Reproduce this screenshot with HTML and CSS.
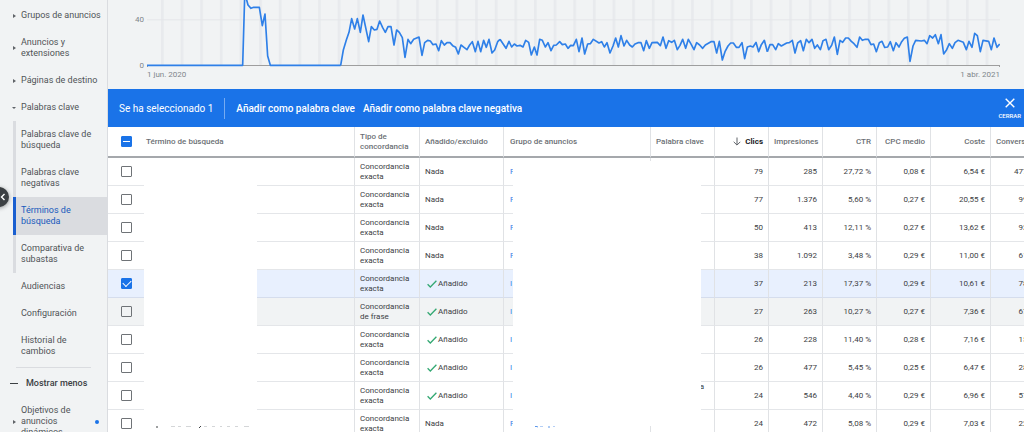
FILE: index.html
```html
<!DOCTYPE html>
<html lang="es">
<head>
<meta charset="utf-8">
<title>Términos de búsqueda</title>
<link rel="stylesheet" href="styles.css">
</head>
<body>
<div class="app">
  <nav class="sidebar">
    <a class="item closed" href="#">Grupos de anuncios</a>
    <a class="item closed" href="#">Anuncios y extensiones</a>
    <a class="item closed" href="#">Páginas de destino</a>
    <a class="item open" href="#">Palabras clave</a>
    <div class="subnav">
      <a class="item" href="#">Palabras clave de búsqueda</a>
      <a class="item" href="#">Palabras clave negativas</a>
      <a class="item current" href="#" aria-current="page">Términos de búsqueda</a>
      <a class="item" href="#">Comparativa de subastas</a>
    </div>
    <a class="item" href="#">Audiencias</a>
    <a class="item" href="#">Configuración</a>
    <a class="item" href="#">Historial de cambios</a>
    <hr class="rule">
    <button class="less" type="button"><span class="minus"></span>Mostrar menos</button>
    <a class="item closed dotted" href="#"><span>Objetivos de anuncios dinámicos</span><i class="dot"></i></a>
    <button class="collapse" type="button" aria-label="Contraer">
      <svg width="6" height="8" viewBox="0 0 6 8"><path d="M4.5 1 1.5 4l3 3" fill="none" stroke="#fff" stroke-width="1.4"/></svg>
    </button>
  </nav>
  <main class="main">
    <section class="chart">
      <div class="scale"><span>40</span><span>0</span></div>
      <div class="plot">
        <svg class="graph" viewBox="441 0 2559 201" preserveAspectRatio="none" aria-hidden="true">
          <defs><pattern id="weeks" x="483" y="0" width="58.9" height="201" patternUnits="userSpaceOnUse"><rect width="8" height="196" fill="#e8eaed"/></pattern></defs>
          <rect x="441" width="2559" height="196" fill="url(#weeks)"/>
          <path d="M441 59.500H3000" stroke="#e4e6e9" stroke-width="3"/>
          <path d="M441 196.500H3000M2998.500 196v5M442.500 196v5" stroke="#9e9e9e" stroke-width="3"/>
          <g class="line">
            <polyline points="441,196 728,196 734,-10 740,0 744,15 753,25 761,22 778,22 787,77 795,42 803,168 811,196 1022,196"/>
            <polyline transform="translate(690 0)" points="332,196 340,150 349,120 357,97 365,56 374,87 382,56 391,97 399,45 416,125 424,80 433,90 441,88 449,63 458,83 466,97 474,80 483,80 492,135 500,90 508,97 517,113 525,172 534,118 542,131 551,118 567,111 576,166 584,128 593,121 601,123 609,134 618,132 626,152 634,122 643,135 651,128 660,128 668,137 677,142 685,162 693,135 702,142 711,149 719,135 727,125 736,155 744,124 752,155 761,121 769,142 777,118 786,159 794,150 803,125 810,118"/>
            <polyline transform="translate(1500 0)" points="0,118 18,145 27,124 35,141 43,132 51,138 60,136 69,141 77,121 86,127 94,165 103,141 111,165 119,118 127,121 136,141 144,128 153,152 161,136 169,135 179,125 187,134 196,132 204,145 212,136 220,137 229,118 237,155 246,114 254,162 263,132 271,131 280,118 297,129 305,125 313,141 321,128 330,159 339,138 347,114 355,141 363,107 372,138 380,121 389,135 397,141 405,132 414,128 423,128 431,152 439,122 448,145 456,128 472,127 481,137 489,111 498,145 506,122 515,127 523,121 532,149 540,136 548,118 557,145 565,118 574,134 582,149 590,128 599,135 608,145 616,135 633,125 642,125 650,159 658,124 667,180 675,155 684,138 692,129 700,129 709,142 717,142 726,128 734,176 742,141 751,138 759,141 768,127 776,155 784,134 793,121 802,155"/>
            <polyline transform="translate(2280 0)" points="22,155 30,134 38,134 47,149 55,131 64,138 80,129 88,128 97,121 105,159 113,129 122,122 130,152 139,118 147,128 156,118 164,145 172,135 181,149 189,122 198,118 206,149 215,136 223,111 232,163 240,121 248,127 257,114 265,114 274,124 282,131 291,142 299,111 307,121 316,118 325,118 333,134 341,132 349,155 358,128 366,124 374,142 383,141 391,125 400,152 408,128 417,141 425,125 433,115 442,111 450,184 459,138 467,121 484,123 493,121 501,131 509,107 518,114 526,104 535,131 543,104 551,162 560,149 568,131 577,145 585,128 594,121 610,127 619,149 627,124 636,142 644,100 652,107 661,155 669,121 686,124 694,149 702,114 711,142 719,132"/>
          </g>
        </svg>
        <div class="dates"><span>1 jun. 2020</span><span>1 abr. 2021</span></div>
      </div>
    </section>
    <div class="actions">
      <span class="count">Se ha seleccionado 1</span>
      <div class="commands">
        <button type="button">Añadir como palabra clave</button>
        <button type="button">Añadir como palabra clave negativa</button>
      </div>
      <button class="close" type="button">
        <svg width="10" height="10" viewBox="0 0 10 10"><path d="M.7.7l8.600 8.600M9.300.7.7 9.300" stroke="#fff" stroke-width="1.400"/></svg>
        CERRAR
      </button>
    </div>
    <div class="results">
      <table class="grid">
        <colgroup><col class="c-check"><col><col class="c-type"><col class="c-added"><col class="c-group"><col class="c-keyword"><col class="c-num"><col class="c-num"><col class="c-num"><col class="c-num"><col class="c-cost"><col class="c-conv"></colgroup>
        <thead>
          <tr><th class="check"><input class="partial" type="checkbox" aria-label="Seleccionar todo"></th><th class="term">Término de búsqueda</th><th>Tipo de concordancia</th><th>Añadido/excluido</th><th class="group">Grupo de anuncios</th><th>Palabra clave</th><th class="num sorted"><svg width="8" height="9" viewBox="0 0 8 9"><path d="M4 .5v7.500M.7 4.800 4 8.100l3.300-3.300" fill="none" stroke="#5f6368"/></svg> Clics</th><th class="wide">Impresiones</th><th class="num">CTR</th><th class="num">CPC medio</th><th class="num">Coste</th><th class="wide">Conversiones</th></tr>
        </thead>
        <tbody>
          <tr><td class="check"><input type="checkbox" aria-label="Fila 1"></td><td class="term"></td><td>Concordancia exacta</td><td>Nada</td><td class="group"><a href="#">F</a></td><td></td><td class="num">79</td><td class="num">285</td><td class="num">27,72 %</td><td class="num">0,08 €</td><td class="num">6,54 €</td><td class="num">477,00</td></tr>
          <tr><td class="check"><input type="checkbox" aria-label="Fila 2"></td><td class="term"></td><td>Concordancia exacta</td><td>Nada</td><td class="group"><a href="#">F</a></td><td></td><td class="num">77</td><td class="num">1.376</td><td class="num">5,60 %</td><td class="num">0,27 €</td><td class="num">20,55 €</td><td class="num">99,00</td></tr>
          <tr><td class="check"><input type="checkbox" aria-label="Fila 3"></td><td class="term"></td><td>Concordancia exacta</td><td>Nada</td><td class="group"><a href="#">F</a></td><td></td><td class="num">50</td><td class="num">413</td><td class="num">12,11 %</td><td class="num">0,27 €</td><td class="num">13,62 €</td><td class="num">93,00</td></tr>
          <tr><td class="check"><input type="checkbox" aria-label="Fila 4"></td><td class="term"></td><td>Concordancia exacta</td><td>Nada</td><td class="group"><a href="#">F</a></td><td></td><td class="num">38</td><td class="num">1.092</td><td class="num">3,48 %</td><td class="num">0,29 €</td><td class="num">11,00 €</td><td class="num">61,00</td></tr>
          <tr class="selected"><td class="check"><input type="checkbox" aria-label="Fila 5" checked></td><td class="term"></td><td>Concordancia exacta</td><td><span class="added"><svg width="10" height="8" viewBox="0 0 10 8"><path d="M.6 4.300 3.300 7 9.400.8" fill="none" stroke="#34a873" stroke-width="1.300"/></svg>Añadido</span></td><td class="group"><a href="#">I</a></td><td></td><td class="num">37</td><td class="num">213</td><td class="num">17,37 %</td><td class="num">0,29 €</td><td class="num">10,61 €</td><td class="num">78,00</td></tr>
          <tr class="hover"><td class="check"><input type="checkbox" aria-label="Fila 6"></td><td class="term"></td><td>Concordancia de frase</td><td><span class="added"><svg width="10" height="8" viewBox="0 0 10 8"><path d="M.6 4.300 3.300 7 9.400.8" fill="none" stroke="#34a873" stroke-width="1.300"/></svg>Añadido</span></td><td class="group"><a href="#">I</a></td><td></td><td class="num">27</td><td class="num">263</td><td class="num">10,27 %</td><td class="num">0,27 €</td><td class="num">7,36 €</td><td class="num">67,00</td></tr>
          <tr><td class="check"><input type="checkbox" aria-label="Fila 7"></td><td class="term"></td><td>Concordancia exacta</td><td><span class="added"><svg width="10" height="8" viewBox="0 0 10 8"><path d="M.6 4.300 3.300 7 9.400.8" fill="none" stroke="#34a873" stroke-width="1.300"/></svg>Añadido</span></td><td class="group"><a href="#">I</a></td><td></td><td class="num">26</td><td class="num">228</td><td class="num">11,40 %</td><td class="num">0,28 €</td><td class="num">7,16 €</td><td class="num">15,00</td></tr>
          <tr><td class="check"><input type="checkbox" aria-label="Fila 8"></td><td class="term"></td><td>Concordancia exacta</td><td><span class="added"><svg width="10" height="8" viewBox="0 0 10 8"><path d="M.6 4.300 3.300 7 9.400.8" fill="none" stroke="#34a873" stroke-width="1.300"/></svg>Añadido</span></td><td class="group"><a href="#">I</a></td><td></td><td class="num">26</td><td class="num">477</td><td class="num">5,45 %</td><td class="num">0,25 €</td><td class="num">6,47 €</td><td class="num">28,00</td></tr>
          <tr><td class="check"><input type="checkbox" aria-label="Fila 9"></td><td class="term"></td><td>Concordancia exacta</td><td><span class="added"><svg width="10" height="8" viewBox="0 0 10 8"><path d="M.6 4.300 3.300 7 9.400.8" fill="none" stroke="#34a873" stroke-width="1.300"/></svg>Añadido</span></td><td class="group"><a href="#">I</a></td><td class="tail">a</td><td class="num">24</td><td class="num">546</td><td class="num">4,40 %</td><td class="num">0,29 €</td><td class="num">6,96 €</td><td class="num">57,00</td></tr>
          <tr><td class="check"><input type="checkbox" aria-label="Fila 10"></td><td class="term"></td><td>Concordancia exacta</td><td>Nada</td><td class="group"><a href="#">F</a></td><td></td><td class="num">24</td><td class="num">472</td><td class="num">5,08 %</td><td class="num">0,29 €</td><td class="num">7,03 €</td><td class="num">22,00</td></tr>
        </tbody>
      </table>
      <div class="cover cover-term"><svg width="113" height="3" viewBox="0 0 113 3"><path d="M13 0v2M57 0l-2 2" stroke="#3c4043"/><path d="M27 .5h4M34 .5h3M42 .5h5M60 .5h3M68 .5h3M76 .5h2M83 .5h3M91 .5h3M100 .5h5" stroke="#d4d6d8"/></svg></div>
      <div class="cover cover-group"><svg width="113" height="3" viewBox="0 0 113 3"><path d="M22 .5h2l1 .6M36 0v2" fill="none" stroke="#5c97ea"/><path d="M27 .5h3M40 .5h2" stroke="#b5cff5"/></svg></div>
    </div>
  </main>
</div>
</body>
</html>
```
FILE: styles.css
```css
* { box-sizing: border-box; }
body {
  margin: 0;
  height: 100vh;
  overflow: hidden;
  background: #f1f3f4;
  color: #3c4043;
  font: 9px/11px Roboto, "Liberation Sans", sans-serif;
}
a { color: inherit; text-decoration: none; }
button { margin: 0; border: 0; padding: 0; background: none; color: inherit; font: inherit; cursor: pointer; }
svg { display: block; }

.app { display: flex; height: 100%; }

/* Sidebar */
.sidebar {
  position: relative;
  flex: none;
  width: 108px;
  padding-top: 2px;
  border-right: 1px solid #dadce0;
}
.item { display: flex; align-items: center; padding: 8px 7px 8px 21px; color: #505357; }
.closed, .open { padding-right: 2px; }
.closed::before, .open::before { content: ""; flex: none; }
.closed::before {
  margin: 0 5px 0 -8px;
  border-left: 3px solid #5f6368;
  border-top: 2px solid transparent;
  border-bottom: 2px solid transparent;
}
.open::before {
  margin: 0 5px 0 -9px;
  border-top: 2px solid #5f6368;
  border-left: 2px solid transparent;
  border-right: 2px solid transparent;
}
.subnav { margin-left: 13px; }
.subnav .item { border-left: 3px solid #dadce0; padding-left: 5px; padding-right: 12px; }
.subnav .current { border-color: #1a5fd0; background: #dadce0; color: #185abc; }
.rule { margin: 2px 16px; border: 0; border-top: 1px solid #dadce0; }
.less { display: flex; align-items: center; gap: 8px; padding: 8px 0 8px 10px; font-weight: 500; color: #3c4043; }
.minus { width: 8px; height: 1px; background: #3c4043; }
.dotted { padding-right: 8px; }
.dotted span { flex: 1; padding-right: 8px; }
.dot { flex: none; width: 4px; height: 4px; border-radius: 50%; background: #1a73e8; }
.collapse {
  position: absolute;
  left: -11px;
  top: 187px;
  display: flex;
  align-items: center;
  justify-content: flex-end;
  width: 20px;
  height: 20px;
  padding-right: 3px;
  border-radius: 50%;
  background: #3c4043;
  box-shadow: 0 1px 4px rgba(0, 0, 0, .4);
}

/* Chart */
.main { flex: 1; min-width: 0; overflow: hidden; }
.chart { display: flex; gap: 3px; height: 89px; padding-right: 24px; color: #80868b; font-size: 8px; }
.scale { display: flex; flex-direction: column; justify-content: space-between; width: 36px; height: 71px; padding-top: 14px; text-align: right; }
.plot { flex: 1; min-width: 0; }
.graph { width: 100%; height: 67px; }
.line { fill: none; stroke: #2f80e8; stroke-width: 5; stroke-linejoin: round; }
.dates { display: flex; justify-content: space-between; padding-top: 2px; }

/* Selection bar */
.actions { display: flex; align-items: center; gap: 11px; height: 38px; padding: 0 3px 0 11px; background: #1a73e8; color: #fff; font-size: 10px; font-weight: 500; }
.count { padding-right: 11px; border-right: 1px solid #76abf1; font-weight: 400; line-height: 21px; }
.commands { display: flex; gap: 8px; }
.close { display: flex; flex-direction: column; align-items: center; gap: 4px; margin-left: auto; padding-top: 2px; font-size: 6px; line-height: 8px; }

/* Search terms table */
.results { position: relative; background: #fff; }
.grid { width: calc(100% + 20px); table-layout: fixed; border-collapse: separate; border-spacing: 0; font-size: 8px; line-height: 10px; }
.c-check { width: 32px; }
.c-type { width: 65px; }
.c-added { width: 84px; }
.c-group { width: 147px; }
.c-keyword { width: 64px; }
.c-num { width: 54px; }
.c-cost { width: 60px; }
.c-conv { width: 53px; }
th, td {
  height: 28px;
  padding: 0 5px;
  border-right: 1px solid #e0e2e5;
  border-bottom: 1px solid #e4e6e9;
  text-align: left;
  overflow: hidden;
}
th { height: 31px; border-bottom: 2px solid #a5a8ac; color: #6b6f74; font-weight: 500; }
.check { padding: 0 0 0 13px; border-right: 0; }
.term, .group { padding-left: 6px; }
.num { text-align: right; white-space: nowrap; }
.sorted { color: #202124; font-weight: 700; }
.sorted svg { display: inline-block; margin-right: 2px; vertical-align: -2px; }
.grid a { color: #3b82e8; }
.selected td { background: #e8f0fe; border-bottom-color: #d5dded; }
.hover td { background: #f1f3f4; }
.added { display: flex; align-items: center; gap: 1px; padding-left: 2px; }
.tail { text-align: right; padding: 0 10px; vertical-align: top; }
input[type="checkbox"] {
  appearance: none;
  display: grid;
  place-items: center;
  width: 11px;
  height: 11px;
  margin: 0;
  border: 1px solid #6f7377;
  border-radius: 1px;
  background: #fff;
}
.hover input[type="checkbox"] { background: transparent; }
input[type="checkbox"]:checked, input.partial[type="checkbox"] { border-color: #1a73e8; background: #1a73e8; }
input:checked::after { content: ""; width: 7px; height: 4px; margin-bottom: 2px; border-left: 1px solid #fff; border-bottom: 1px solid #fff; transform: rotate(-45deg); }
input.partial::after { content: ""; width: 7px; height: 1px; background: #fff; }

/* Blank panels lying over the table */
.cover { position: absolute; display: flex; align-items: flex-end; background: #fff; }
.cover svg { margin-bottom: -3px; }
.cover-term { left: 36px; top: 32px; width: 113px; height: 267px; }
.cover-group { left: 405px; top: 34px; width: 188px; height: 265px; }
```
